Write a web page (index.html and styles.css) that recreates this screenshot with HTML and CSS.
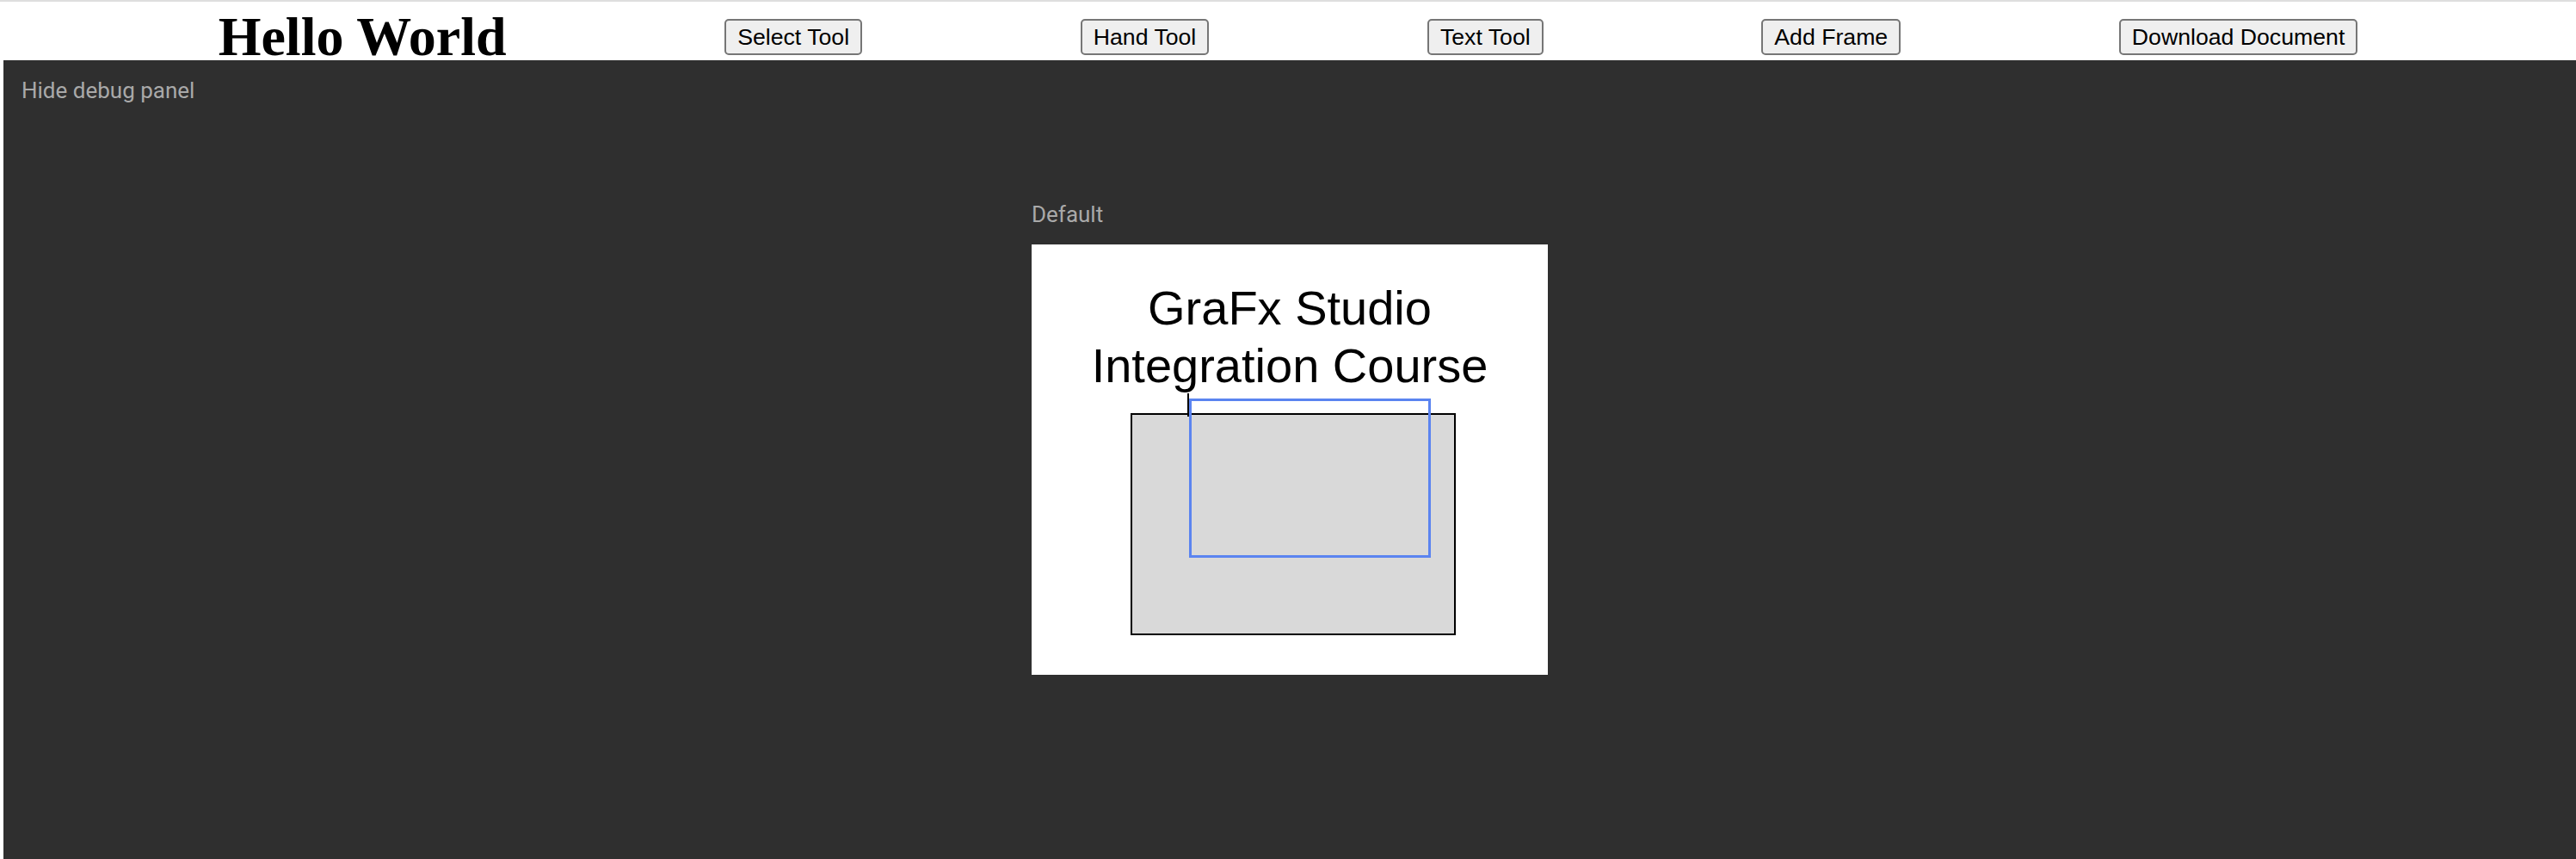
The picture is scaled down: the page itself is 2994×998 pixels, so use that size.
FILE: index.html
```html
<!DOCTYPE html>
<html lang="en">
<head>
<meta charset="utf-8">
<title>GraFx Studio Integration</title>
<link rel="stylesheet" href="styles.css">
</head>
<body>
  <header class="topbar">
    <h1 class="title">Hello World</h1>
    <button class="tool-btn" type="button">Select Tool</button>
    <button class="tool-btn" type="button">Hand Tool</button>
    <button class="tool-btn" type="button">Text Tool</button>
    <button class="tool-btn" type="button">Add Frame</button>
    <button class="tool-btn" type="button">Download Document</button>
  </header>
  <main class="workspace">
    <a class="debug-toggle">Hide debug panel</a>
    <div class="page">
      <div class="page-label">Default</div>
      <div class="frame-text">GraFx Studio Integration Course</div>
      <div class="frame-shape"></div>
      <div class="caret"></div>
      <div class="selection"></div>
    </div>
  </main>
</body>
</html>
```

FILE: styles.css
```css
html, body {
  margin: 0;
  padding: 0;
  background: #ffffff;
}

body {
  width: 2994px;
  height: 998px;
  overflow: hidden;
}

.topbar {
  box-sizing: border-box;
  height: 70px;
  border-top: 2px solid #dedede;
  padding-top: 14px;
  display: flex;
  align-items: center;
  justify-content: space-evenly;
  background: #ffffff;
}

.title {
  margin: 0;
  font-family: "Liberation Serif", "Times New Roman", serif;
  font-weight: bold;
  font-size: 64px;
  line-height: 64px;
  color: #000000;
}

.tool-btn {
  box-sizing: border-box;
  height: 42px;
  margin: 0;
  padding: 0 13px;
  border: 2px solid #767676;
  border-radius: 5px;
  background: #efefef;
  color: #000000;
  font-family: "Liberation Sans", Arial, sans-serif;
  font-size: 26.67px;
  line-height: 36px;
}

.workspace {
  position: relative;
  margin-left: 4px;
  height: 928px;
  background: #2f2f2f;
  display: flex;
  align-items: center;
  justify-content: center;
}

.debug-toggle {
  position: absolute;
  top: 20px;
  left: 21px;
  font-family: Roboto, "Liberation Sans", sans-serif;
  font-size: 26px;
  color: #a9a9a9;
  cursor: pointer;
}

.page {
  position: relative;
  width: 600px;
  height: 500px;
  background: #ffffff;
}

.page-label {
  position: absolute;
  left: 0;
  bottom: calc(100% + 20px);
  font-family: Roboto, "Liberation Sans", sans-serif;
  font-size: 26px;
  color: #a9a9a9;
  white-space: nowrap;
}

.frame-text {
  position: absolute;
  left: 50px;
  top: 40px;
  width: 500px;
  text-align: center;
  font-family: "Liberation Sans", Arial, sans-serif;
  font-size: 56px;
  line-height: 1.2;
  color: #000000;
}

.frame-shape {
  position: absolute;
  left: 115px;
  top: 196px;
  width: 378px;
  height: 258px;
  box-sizing: border-box;
  border: 2px solid #000000;
  background: #d9d9d9;
}

.caret {
  position: absolute;
  left: 181px;
  top: 173px;
  width: 2px;
  height: 27px;
  background: #000000;
}

.selection {
  position: absolute;
  left: 183px;
  top: 179px;
  width: 281px;
  height: 185px;
  box-sizing: border-box;
  border: 3px solid #5b84f0;
}
```
